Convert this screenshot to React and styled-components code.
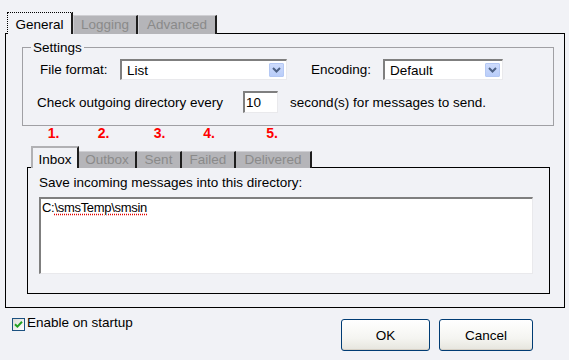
import React from "react";
import styled, { createGlobalStyle } from "styled-components";

const Global = createGlobalStyle`
  html, body { margin: 0; padding: 0; background: #f1f2f6; }
  body {
    font-family: "Liberation Sans", Arial, sans-serif;
    font-size: 13.5px;
    line-height: 15px;
    color: #000;
  }
  * { box-sizing: border-box; }
`;

const Window = styled.div`
  width: 569px;
  height: 360px;
  padding-top: 12px;
  display: flex;
  flex-direction: column;
  overflow: hidden;
`;

const MainTabs = styled.div`
  display: flex;
  align-items: flex-end;
  padding-left: 7px;
  margin-bottom: -1px;
  position: relative;
  z-index: 1;
`;

const MainTab = styled.div`
  width: ${(p) => p.$w}px;
  height: ${(p) => (p.$active ? 22 : 19)}px;
  display: flex;
  align-items: flex-end;
  justify-content: center;
  padding-bottom: 2px;
  background: ${(p) => (p.$active ? "#f1f2f6" : "#b5b5b9")};
  color: ${(p) => (p.$active ? "#000" : "#8a8a8a")};
  border-top: 1px solid ${(p) => (p.$active ? "#000" : "#cfcfd3")};
  border-left: 1px solid ${(p) => (p.$active ? "#000" : "#cfcfd3")};
  border-right: 2px solid #1e1e1e;
  border-style: ${(p) => (p.$active ? "dotted solid none dotted" : "solid")};
  border-bottom: none;
`;

const MainPanel = styled.div`
  margin: 0 4px 0 5px;
  border: 1px solid #000;
  display: flex;
  flex-direction: column;
`;

const GroupBox = styled.fieldset`
  margin: 6px 10px 0 16px;
  padding: 0 0 12px 0;
  border: 1px solid #a0a0a4;
  min-width: 0;
`;

const Legend = styled.legend`
  margin-left: 8px;
  padding: 0 2px;
  line-height: 15px;
`;

const Row = styled.div`
  display: flex;
  align-items: center;
  padding-left: ${(p) => p.$indent}px;
  margin-top: ${(p) => p.$top}px;
  height: ${(p) => p.$h}px;
`;

const FieldLabel = styled.span`
  width: ${(p) => p.$w}px;
  margin-left: ${(p) => p.$ml || 0}px;
  flex: none;
`;

const SelectBox = styled.div`
  width: ${(p) => p.$w}px;
  height: 21px;
  flex: none;
  display: flex;
  align-items: center;
  background: #fff;
  border-top: 2px solid #7f7f7f;
  border-left: 2px solid #7f7f7f;
  border-right: 1px solid #e9e9ec;
  border-bottom: 1px solid #e9e9ec;
  padding: 2px 2px 2px 0;
`;

const SelectValue = styled.span`
  flex: 1;
  padding-left: 5px;
`;

const ArrowButton = styled.span`
  width: 15px;
  height: 14px;
  display: flex;
  align-items: center;
  justify-content: center;
  background: linear-gradient(#cddbfc, #b9cdf9);
  border: 1px solid #b4c8f4;
  border-radius: 1px;
`;

const NumberBox = styled.div`
  width: 35px;
  height: 22px;
  flex: none;
  margin: 0 12px 0 20px;
  background: #fff;
  border-top: 2px solid #7f7f7f;
  border-left: 2px solid #7f7f7f;
  border-right: 1px solid #e9e9ec;
  border-bottom: 1px solid #e9e9ec;
  padding: 2px 0 0 1px;
`;

const FolderTabs = styled.div`
  display: flex;
  align-items: flex-end;
  margin: 0 14px -1px 21px;
  padding-left: 4px;
  position: relative;
  z-index: 1;
`;

const TabColumn = styled.div`
  display: flex;
  flex-direction: column;
  align-items: stretch;
  width: ${(p) => p.$w}px;
`;

const StepNumber = styled.span`
  color: #ff0000;
  font-weight: bold;
  font-size: 14px;
  line-height: 15px;
  text-align: center;
  padding-right: ${(p) => p.$shift || 0}px;
`;

const FolderTab = styled.div`
  margin-top: ${(p) => (p.$active ? 5 : 10)}px;
  height: ${(p) => (p.$active ? 22 : 17)}px;
  display: flex;
  align-items: flex-end;
  justify-content: center;
  padding-bottom: 1px;
  background: ${(p) => (p.$active ? "#f1f2f6" : "#b5b5b9")};
  color: ${(p) => (p.$active ? "#000" : "#8a8a8a")};
  border-top: ${(p) => (p.$active ? "2px solid #b1b1b4" : "1px solid #cfcfd3")};
  border-left: ${(p) => (p.$active ? "2px solid #b1b1b4" : "none")};
  border-right: 2px solid #1e1e1e;
`;

const FolderPanel = styled.div`
  margin: 0 14px 13px 21px;
  border: 1px solid #000;
  padding: 7px 16px 19px 11px;
  display: flex;
  flex-direction: column;
`;

const Caption = styled.div`
  line-height: 15px;
`;

const PathBox = styled.div`
  margin-top: 7px;
  height: 77px;
  background: #fff;
  border-top: 2px solid #7f7f7f;
  border-left: 2px solid #7f7f7f;
  border-right: 1px solid #e9e9ec;
  border-bottom: 1px solid #e9e9ec;
  padding: 1px 0 0 1px;
  font-size: 13px;
  letter-spacing: -0.3px;
`;

const Misspelled = styled.span`
  text-decoration: underline dotted #e00000;
  text-underline-offset: 2px;
`;

const Footer = styled.div`
  display: flex;
  align-items: flex-start;
  justify-content: space-between;
  padding: 7px 36px 0 12px;
`;

const CheckLabel = styled.label`
  display: flex;
  align-items: flex-start;
  gap: 2px;
`;

const CheckBox = styled.span`
  width: 13px;
  height: 13px;
  margin-top: 3px;
  border: 1px solid #1c5180;
  background: linear-gradient(135deg, #dcdcd7, #fff);
  display: flex;
  align-items: center;
  justify-content: center;
`;

const Buttons = styled.div`
  display: flex;
  gap: 9px;
  margin-top: 4px;
`;

const Button = styled.button`
  width: ${(p) => p.$w}px;
  height: 32px;
  font: inherit;
  color: #000;
  border: 1px solid #003c74;
  border-radius: 3px;
  background: linear-gradient(#ffffff 0%, #f5f5f1 60%, #e6e5de 100%);
  box-shadow: inset 0 -1px 0 #d6d0c5;
  padding: 0;
`;

const Chevron = () => (
  <svg width="9" height="6" viewBox="0 0 9 6">
    <path d="M1 1 L4.5 4.5 L8 1" fill="none" stroke="#4d6185" strokeWidth="2" />
  </svg>
);

const Check = () => (
  <svg width="9" height="9" viewBox="0 0 9 9">
    <path d="M1 4.2 L3.4 6.6 L8 1.8" fill="none" stroke="#21a121" strokeWidth="2" />
  </svg>
);

const folders = [
  { n: "1.", label: "Inbox", w: 48, active: true, shift: 3 },
  { n: "2.", label: "Outbox", w: 58, shift: 9 },
  { n: "3.", label: "Sent", w: 45 },
  { n: "4.", label: "Failed", w: 54 },
  { n: "5.", label: "Delivered", w: 76, shift: 4 },
];

export default function App() {
  return (
    <>
      <Global />
      <Window>
        <MainTabs>
          <MainTab $w={66} $active>General</MainTab>
          <MainTab $w={65}>Logging</MainTab>
          <MainTab $w={79}>Advanced</MainTab>
        </MainTabs>
        <MainPanel>
          <GroupBox>
            <Legend>Settings</Legend>
            <Row $indent={17} $top={4} $h={21}>
              <FieldLabel $w={80}>File format:</FieldLabel>
              <SelectBox $w={167}>
                <SelectValue>List</SelectValue>
                <ArrowButton><Chevron /></ArrowButton>
              </SelectBox>
              <FieldLabel $w={72} $ml={24}>Encoding:</FieldLabel>
              <SelectBox $w={120}>
                <SelectValue>Default</SelectValue>
                <ArrowButton><Chevron /></ArrowButton>
              </SelectBox>
            </Row>
            <Row $indent={14} $top={11} $h={22}>
              <span>Check outgoing directory every</span>
              <NumberBox>10</NumberBox>
              <span>second(s) for messages to send.</span>
            </Row>
          </GroupBox>
          <FolderTabs>
            {folders.map((f) => (
              <TabColumn key={f.label} $w={f.w}>
                <StepNumber $shift={f.shift}>{f.n}</StepNumber>
                <FolderTab $active={f.active}>{f.label}</FolderTab>
              </TabColumn>
            ))}
          </FolderTabs>
          <FolderPanel>
            <Caption>Save incoming messages into this directory:</Caption>
            <PathBox>
              C:<Misspelled>\smsTemp\smsin</Misspelled>
            </PathBox>
          </FolderPanel>
        </MainPanel>
        <Footer>
          <CheckLabel>
            <CheckBox><Check /></CheckBox>
            Enable on startup
          </CheckLabel>
          <Buttons>
            <Button $w={89}>OK</Button>
            <Button $w={94}>Cancel</Button>
          </Buttons>
        </Footer>
      </Window>
    </>
  );
}
